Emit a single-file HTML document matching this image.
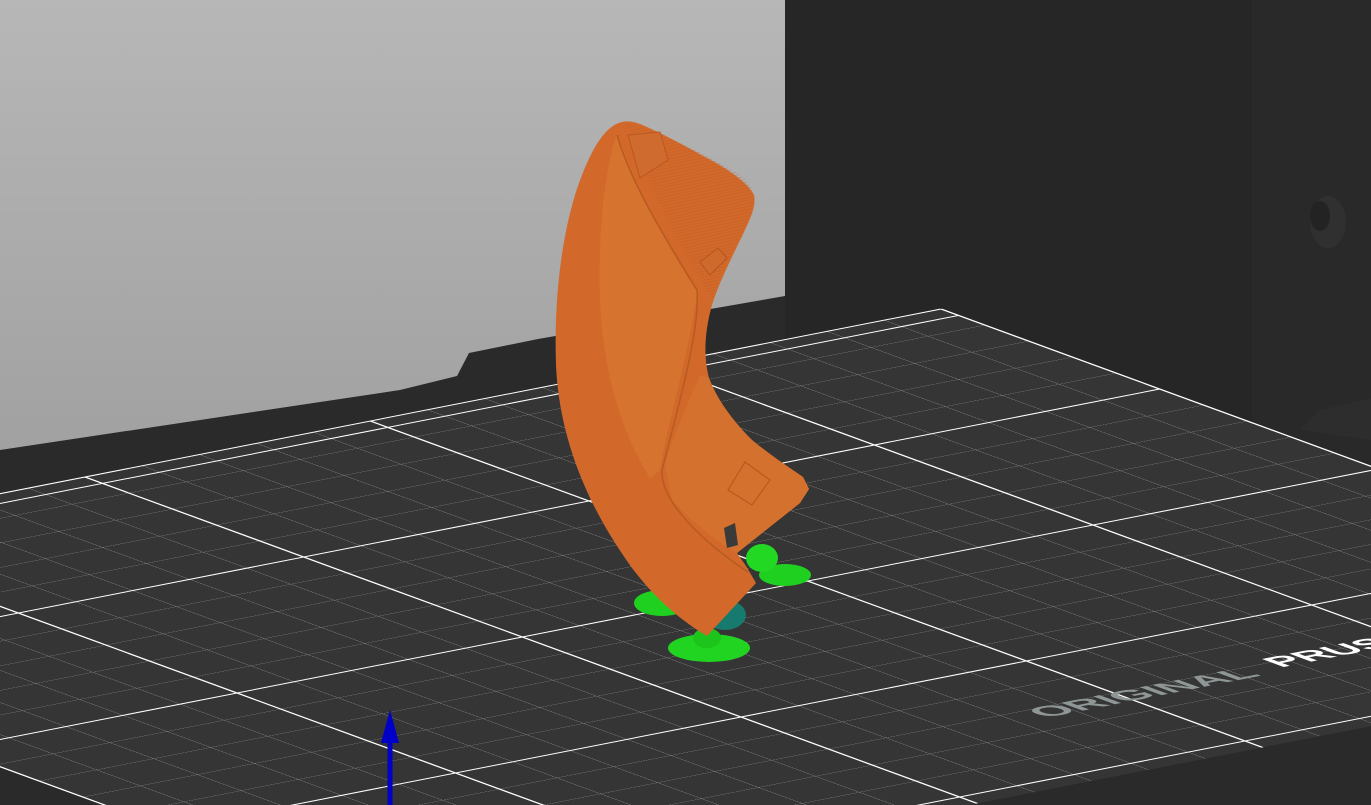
<!DOCTYPE html>
<html><head><meta charset="utf-8"><style>
html,body{margin:0;padding:0;background:#2a2a2a;overflow:hidden;width:1371px;height:805px}
svg{display:block}
</style></head><body>
<svg width="1371" height="805" viewBox="0 0 1371 805" xmlns="http://www.w3.org/2000/svg">
<defs>
<linearGradient id="wall" x1="0" y1="0" x2="0" y2="1">
<stop offset="0" stop-color="#b7b7b7"/><stop offset="1" stop-color="#a1a1a1"/>
</linearGradient>
<radialGradient id="bedg" cx="600" cy="640" r="700" gradientUnits="userSpaceOnUse">
<stop offset="0" stop-color="#4a4a4a"/><stop offset="1" stop-color="#353535"/>
</radialGradient>
<pattern id="minor" patternUnits="userSpaceOnUse" width="10" height="10">
<path d="M0,0 H10 M0,0 V10" stroke="#ffffff" stroke-opacity="0.6" stroke-width="0.16" fill="none"/>
</pattern>
<pattern id="layers" patternUnits="userSpaceOnUse" width="4" height="3" patternTransform="rotate(-12)">
<rect width="4" height="1" fill="#b8561e" opacity="0.3"/>
</pattern>
</defs>

<rect width="1371" height="805" fill="#2a2a2a"/>
<rect x="785" y="0" width="586" height="480" fill="#262626"/>
<rect x="1252" y="0" width="119" height="480" fill="#292929"/>
<ellipse cx="1328" cy="222" rx="18" ry="26" fill="#303030"/>
<ellipse cx="1320" cy="216" rx="10" ry="15" fill="#232323"/>
<polygon points="1300,430 1320,410 1371,398 1371,440" fill="#2d2d2d"/>

<!-- wall -->
<polygon points="0,0 785,0 785,296 538,339 469,353 457,376 400,390 0,450" fill="url(#wall)"/>

<!-- bed -->
<g transform="matrix(5.707,-1.12,4.373,1.6,85,477)">
<rect x="-100" y="0" width="250" height="204" fill="url(#bedg)"/>
<rect x="-100" y="0" width="250" height="204" fill="url(#minor)"/>
<g stroke="#ffffff" stroke-width="0.42" fill="none">
<path d="M-100,0 H150 M-100,4 H150 M-100,50 H150 M-100,100 H150 M-100,150 H150 M-100,200 H150"/>
<path d="M-100,0 V204 M-50,0 V204 M0,0 V204 M50,0 V204 M100,0 V204 M150,0 V204"/>
</g>
<text x="34.4" y="174.7" font-family="Liberation Sans, sans-serif" font-weight="bold" font-size="7.2" fill="#8f9696" textLength="38" lengthAdjust="spacingAndGlyphs">ORIGINAL</text>
<text x="77" y="173" font-family="Liberation Sans, sans-serif" font-weight="bold" font-size="7.2" fill="#ffffff">PRUSA</text>
</g>

<!-- supports -->
<ellipse cx="662" cy="603" rx="28" ry="13" fill="#20d020"/>
<ellipse cx="709" cy="648" rx="41" ry="14" fill="#22d422"/>
<ellipse cx="785" cy="575" rx="26" ry="11" fill="#20d020"/>
<ellipse cx="762" cy="558" rx="16" ry="14" fill="#22d822"/>
<ellipse cx="730" cy="535" rx="12" ry="12" fill="#22d822"/>
<ellipse cx="725" cy="615" rx="21" ry="15" fill="#167a6e"/>
<ellipse cx="707" cy="638" rx="14" ry="10" fill="#1cc41c"/>

<!-- part -->
<path d="M622,122 C603,126 588,155 575,195 C560,245 554,305 556,365 C559,435 585,500 625,558 C650,595 680,620 707,636 L756,583 L746,566 L737,553 L800,503 L809,489 L803,477 C790,468 770,455 752,440 C735,423 718,402 709,378 C703,355 705,330 712,305 C720,280 733,255 745,230 C752,215 756,205 754,195 C748,183 730,170 705,157 C680,143 655,130 640,124 C632,121 627,121 622,122 Z" fill="#d2692b"/>
<path d="M617,133 C605,170 598,230 600,300 C603,370 620,430 650,478 L660,470 C668,420 690,350 697,292 C670,250 640,200 617,133 Z" fill="#d6742f"/>
<path d="M665,465 C672,440 685,410 700,375 L709,378 C718,402 735,423 752,440 C770,455 790,468 803,477 L809,489 L800,503 L737,553 C715,540 690,520 672,500 Z" fill="#d5712e"/>
<path d="M622,122 C655,130 700,150 740,175 C752,185 756,195 754,205 C740,240 720,270 712,300 C690,260 660,215 630,130 Z" fill="url(#layers)"/>
<path d="M617,135 C630,180 660,230 697,290 C700,330 680,400 662,470 C660,500 700,540 748,572" stroke="#b85b22" stroke-width="1.6" fill="none"/>
<path d="M628,135 L660,132 L668,160 L640,178 Z" fill="#cf6b2e" stroke="#b8581f" stroke-width="1"/>
<path d="M700,262 L718,248 L727,258 L710,275 Z" fill="#cf6a2d" stroke="#b35520" stroke-width="1"/>
<path d="M745,462 L770,480 L752,505 L728,490 Z" fill="none" stroke="#b8591f" stroke-width="1.2"/>
<polygon points="724,528 735,523 738,545 727,548" fill="#3a3a3a"/>

<!-- z arrow -->
<line x1="390" y1="738" x2="390" y2="805" stroke="#0000c8" stroke-width="5"/>
<polygon points="390,710 381,743 399,743" fill="#0000c8"/>
</svg>
</body></html>
